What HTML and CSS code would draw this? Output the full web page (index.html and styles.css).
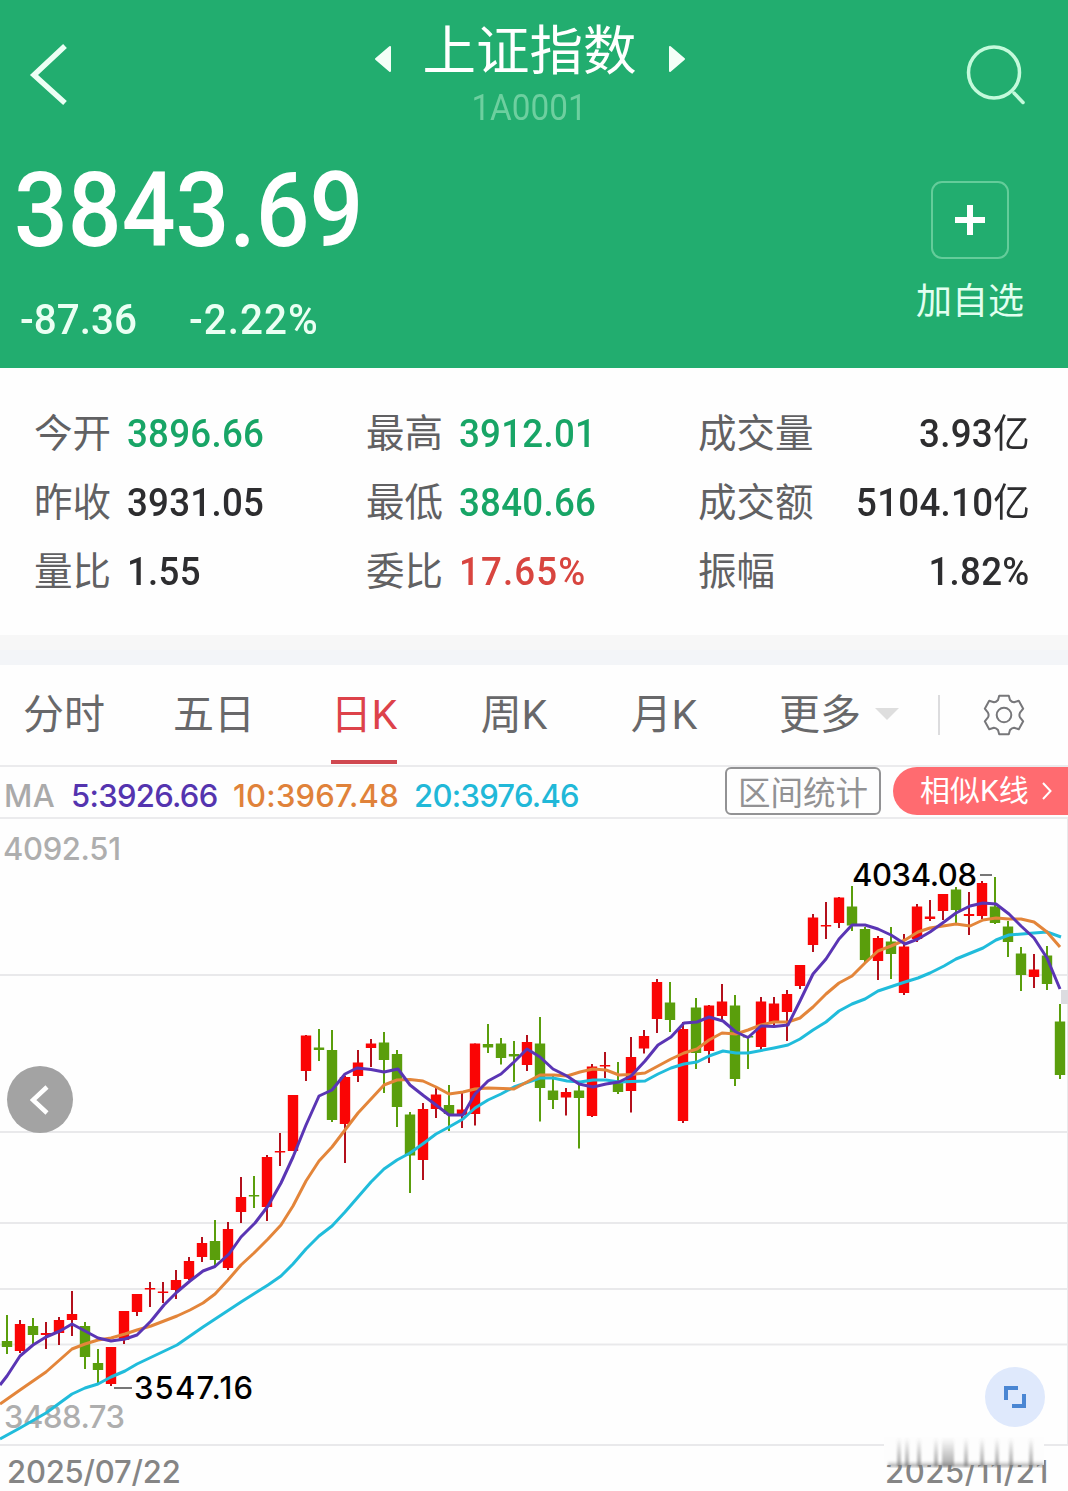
FILE: index.html
```
<!DOCTYPE html>
<html lang="zh-CN">
<head>
    <meta charset="UTF-8">
    <meta name="viewport" content="width=device-width, initial-scale=1.0">
    <title>上证指数</title>
    <link rel="stylesheet" href="styles.css">
</head>
<body>
    <header class="header">
        <div class="nav">
            <svg class="back" width="40" height="64" viewBox="0 0 40 64"><path d="M36 4 L5 33 L36 61" transform="translate(0 -1)"/></svg>
            <div class="title-box">
                <div class="title-row">
                    <svg width="18" height="28" viewBox="0 0 18 28"><path d="M16 2 V26 L2 14 Z"/></svg>
                    <h1>上证指数</h1>
                    <svg width="18" height="28" viewBox="0 0 18 28"><path d="M2 2 V26 L16 14 Z"/></svg>
                </div>
                <div class="code">1A0001</div>
            </div>
            <svg class="search" width="62" height="62" viewBox="0 0 62 62"><circle cx="30" cy="29.500" r="25.500"/><path d="M50 50 L59 59.500"/></svg>
        </div>
        <div class="quote">
            <div class="price-box">
                <div class="price">3843.69</div>
                <div class="change"><span class="diff">-87.36</span><span class="pct">-2.22%</span></div>
            </div>
            <div class="add">
                <div class="add-btn"><svg width="32" height="32" viewBox="0 0 32 32"><path d="M1 16 H31 M16 1 V31"/></svg></div>
                <span>加自选</span>
            </div>
        </div>
    </header>

    <section class="stats">
        <div class="stat"><label>今开</label><b class="down">3896.66</b></div>
        <div class="stat"><label>最高</label><b class="down">3912.01</b></div>
        <div class="stat wide"><label>成交量</label><b>3.93<i>亿</i></b></div>
        <div class="stat"><label>昨收</label><b>3931.05</b></div>
        <div class="stat"><label>最低</label><b class="down">3840.66</b></div>
        <div class="stat wide"><label>成交额</label><b>5104.10<i>亿</i></b></div>
        <div class="stat"><label>量比</label><b>1.55</b></div>
        <div class="stat"><label>委比</label><b class="up">17.65%</b></div>
        <div class="stat wide"><label>振幅</label><b>1.82%</b></div>
    </section>
    <div class="divider"></div>

    <nav class="tabs">
        <div class="tab"><span>分时</span></div>
        <div class="tab"><span>五日</span></div>
        <div class="tab active"><span>日K</span></div>
        <div class="tab"><span>周K</span></div>
        <div class="tab"><span>月K</span></div>
        <div class="tab more"><span>更多</span><i class="caret"></i></div>
        <div class="gear">
            <svg width="44" height="44" viewBox="-22 -22 44 44">
                <path d="M-6 -15 L-4.800 -19.300 H4.800 L6 -15 Q8 -12.800 10 -12.700 L14.800 -14.300 L19.200 -6.300 L16 -2.300 Q14.800 0 16 2.300 L19.200 6.300 L14.800 14.300 L10 12.700 Q8 12.800 6 15 L4.800 19.300 H-4.800 L-6 15 Q-8 12.800 -10 12.700 L-14.800 14.300 L-19.200 6.300 L-16 2.300 Q-14.800 0 -16 -2.300 L-19.200 -6.300 L-14.800 -14.300 L-10 -12.700 Q-8 -12.800 -6 -15 Z"/>
                <circle r="7.300"/>
            </svg>
        </div>
    </nav>

    <div class="ma-bar">
        <span class="ma">MA</span>
        <span class="ma5">5:3926.66</span>
        <span class="ma10">10:3967.48</span>
        <span class="ma20">20:3976.46</span>
        <div class="range-btn">区间统计</div>
        <div class="similar-btn">相似K线<svg width="12" height="20" viewBox="0 0 12 20"><path d="M2 2 L9.500 10 L2 18"/></svg></div>
    </div>

    <div class="chart-box">
        <svg id="chart" width="1068" height="627" viewBox="0 819 1068 627"></svg>
        <div class="prev"><svg width="20" height="30" viewBox="0 0 20 30"><path d="M17 2 L3 15 L17 28"/></svg></div>
        <div class="full"><svg width="24" height="24" viewBox="0 0 24 24"><path d="M3 15 V3 H15 M21 9 V21 H9"/></svg></div>
    </div>

    <footer class="dates">
        <span>2025/07/22</span>
        <span class="end">2025/11/21</span>
        <svg class="smear" width="170" height="34" viewBox="882 1434 170 34">
            <defs>
                <linearGradient id="fade" x1="0" y1="0" x2="0" y2="1">
                    <stop offset="0" stop-color="#777" stop-opacity="0"/>
                    <stop offset="1" stop-color="#777" stop-opacity=".65"/>
                </linearGradient>
                <filter id="soft" x="-5%" y="-10%" width="110%" height="120%"><feGaussianBlur stdDeviation="1.2 .8"/></filter>
            </defs>
            <rect x="884" y="1437" width="160" height="28" fill="#fdfdfd"/>
            <g id="streaks" fill="url(#fade)" filter="url(#soft)"></g>
        </svg>
    </footer>

    <script src="chart.js"></script>
</body>
</html>
```
FILE: styles.css
```
* {
    margin: 0;
    padding: 0;
    box-sizing: border-box;
}

body {
    width: 1068px;
    height: 1491px;
    overflow: hidden;
    background: #fefefe;
    font-family: Roboto, "Noto Sans CJK SC", sans-serif;
    color: #2d2d2f;
}

svg {
    display: block;
    fill: none;
}

.header {
    height: 368px;
    background: #22ad6f;
    color: #fff;
}

.nav {
    display: flex;
    justify-content: space-between;
    height: 150px;
    padding: 0 42px 0 29px;
}

.back {
    margin-top: 43px;
    stroke: #ecfff4;
    stroke-width: 5.5;
}

.search {
    margin-top: 43px;
    stroke: #c3fadb;
    stroke-width: 3.5;
    stroke-linecap: round;
}

.title-box {
    display: flex;
    flex-direction: column;
    align-items: center;
    padding-top: 13px;
    margin-left: 26px;
}

.title-row {
    display: flex;
    align-items: center;
    gap: 31px;
    height: 77px;
}

.title-row svg {
    margin-top: 14px;
    fill: #f4fff8;
    stroke: #f4fff8;
    stroke-width: 2;
    stroke-linejoin: round;
}

h1 {
    font-size: 53.5px;
    line-height: 80px;
    font-weight: 400;
}

.code {
    font-size: 37px;
    line-height: 36px;
    color: #6dcf9f;
    transform: scaleX(.9);
}

.quote {
    display: flex;
    justify-content: space-between;
    padding: 0 44px 0 14px;
}

.price {
    margin-top: 6px;
    font-size: 103px;
    line-height: 110px;
    font-weight: 500;
    transform: scaleX(.92);
    transform-origin: left;
}

.change {
    display: flex;
    margin: 28px 0 0 6px;
    font-size: 43px;
    line-height: 50px;
    font-weight: 500;
    color: #eafff3;
}

.change span {
    width: 169px;
    transform: scaleX(.94);
    transform-origin: left;
}

.pct {
    letter-spacing: 1.1px;
}

.add {
    display: flex;
    flex-direction: column;
    align-items: center;
    padding-top: 31px;
    font-size: 36px;
    line-height: 50px;
    color: #e2fff0;
}

.add-btn {
    display: flex;
    align-items: center;
    justify-content: center;
    width: 78px;
    height: 78px;
    margin-bottom: 18px;
    border: 2px solid #64cc9a;
    border-radius: 11px;
}

.add-btn svg {
    stroke: #fff;
    stroke-width: 6;
}

.stats {
    display: grid;
    grid-template-columns: 332px 332px 332px;
    grid-auto-rows: 69px;
    height: 267px;
    padding: 32px 38px 0 34px;
}

.stat {
    display: flex;
    align-items: center;
    gap: 16px;
    line-height: 69px;
}

.stat label {
    margin-top: -2px;
    font-size: 38.5px;
    color: #616163;
}

.stat b {
    font-size: 39px;
    font-weight: 500;
    letter-spacing: 0.3px;
    transform: scaleX(.94);
    transform-origin: left;
}

.stat i {
    font-style: normal;
    font-weight: 400;
}

.wide {
    justify-content: space-between;
}

.wide b {
    transform-origin: right;
}

.stat .down { color: #18a566; }
.stat .up {
    color: #d8453f;
    letter-spacing: 1.2px;
}

.divider {
    height: 30px;
    background: linear-gradient(#f7f7f7 50%, #f3f5f8 50%);
}

.tabs {
    display: flex;
    height: 102px;
    margin-left: -11px;
    border-bottom: 2px solid #ebebed;
}

.tab {
    display: flex;
    justify-content: center;
    width: 150px;
    font-size: 41px;
    line-height: 101px;
    color: #68686a;
}

.tab span {
    height: 99px;
}

.active span {
    border-bottom: 4px solid #d04850;
    color: #dd424a;
}

.more {
    align-items: center;
    justify-content: flex-start;
    width: 199px;
    padding-left: 40px;
}

.more span {
    height: 101px;
}

.caret {
    margin-left: 14px;
    margin-top: -2px;
    border: 12px solid transparent;
    border-top-color: #dedede;
    border-bottom: 0;
}

.gear {
    display: flex;
    align-items: center;
    height: 40px;
    margin-top: 30px;
    padding-left: 42px;
    border-left: 2px solid #dcdcde;
}

.gear svg {
    stroke: #77777a;
    stroke-width: 2;
    stroke-linejoin: round;
}

.ma-bar {
    display: flex;
    height: 52px;
    padding-left: 4px;
    border-bottom: 2px solid #ebebed;
    font-family: Inter, Roboto, "Noto Sans CJK SC", sans-serif;
    font-size: 31px;
    line-height: 58px;
    font-weight: 500;
    letter-spacing: -0.7px;
}

.ma {
    width: 67px;
    color: #aaa;
    letter-spacing: 0.5px;
}

.ma5 {
    width: 162px;
    color: #5434af;
}

.ma10 {
    width: 181px;
    color: #e0823a;
    letter-spacing: 0.2px;
}

.ma20 {
    width: 311px;
    color: #21b8d8;
}

.range-btn {
    width: 156px;
    height: 48px;
    border: 2px solid #929294;
    border-radius: 6px;
    font-family: "Noto Sans CJK SC", sans-serif;
    font-size: 32.5px;
    line-height: 44px;
    font-weight: 400;
    letter-spacing: 0;
    text-align: center;
    color: #929294;
}

.similar-btn {
    display: flex;
    align-items: center;
    gap: 12px;
    width: 175px;
    height: 48px;
    margin-left: 12px;
    padding-left: 27px;
    border-radius: 24px 0 0 24px;
    background: #ff6b70;
    font-family: Roboto, "Noto Sans CJK SC", sans-serif;
    font-size: 30px;
    line-height: 52px;
    font-weight: 400;
    letter-spacing: 0;
    color: #fff;
    white-space: nowrap;
}

.similar-btn svg {
    stroke: #fff;
    stroke-width: 2;
}

.chart-box {
    position: relative;
    height: 627px;
}

.grid {
    stroke: #e9e9eb;
    stroke-width: 2;
}

.label {
    font-family: Inter, Roboto, sans-serif;
    font-size: 31px;
    font-weight: 500;
    fill: #000;
}

.label.axis {
    fill: #aeaeae;
}

.line {
    stroke-width: 3;
    stroke-linejoin: round;
}

.prev,
.full {
    position: absolute;
    display: flex;
    align-items: center;
    justify-content: center;
    border-radius: 50%;
}

.prev {
    left: 7px;
    top: 247px;
    width: 66px;
    height: 67px;
    background: #a3a3a3;
}

.prev svg {
    stroke: #fff;
    stroke-width: 4.5;
}

.full {
    left: 985px;
    top: 548px;
    width: 60px;
    height: 60px;
    background: #dfe9fc;
}

.full svg {
    stroke: #4a86d3;
    stroke-width: 4;
}

.dates {
    position: relative;
    display: flex;
    justify-content: space-between;
    padding: 0 19px 0 7px;
    font-family: Inter, Roboto, sans-serif;
    font-size: 31px;
    line-height: 52px;
    font-weight: 500;
    letter-spacing: -0.2px;
    color: #858585;
}

.end {
    letter-spacing: 0.6px;
}

.smear {
    position: absolute;
    left: 882px;
    top: -12px;
}
```
FILE: chart.js
```
const NS = 'http://www.w3.org/2000/svg';
const chart = document.getElementById('chart');
const RED = '#fa0505';
const GREEN = '#5a9e0c';

function add(parent, tag, attrs, text) {
    const el = document.createElementNS(NS, tag);
    for (const key in attrs) el.setAttribute(key, attrs[key]);
    if (text) el.textContent = text;
    parent.appendChild(el);
}

// direction, high, low, body top, body bottom
const candles = [
    ['g', 1315, 1354, 1341, 1347], ['r', 1320, 1353, 1324, 1351], ['g', 1318, 1345, 1326, 1335],
    ['r', 1322, 1349, 1333, 1335], ['r', 1317, 1345, 1320, 1333], ['r', 1291, 1336, 1314, 1320],
    ['g', 1322, 1369, 1326, 1357], ['g', 1349, 1383, 1363, 1370], ['r', 1347, 1386, 1347, 1384],
    ['r', 1311, 1344, 1311, 1340], ['r', 1294, 1316, 1294, 1312], ['r', 1282, 1307, 1288, 1289.5],
    ['r', 1282, 1303, 1291.5, 1293], ['r', 1270, 1299, 1280, 1290], ['r', 1257, 1280, 1261, 1279],
    ['r', 1237, 1262, 1243, 1257], ['g', 1220, 1267, 1241, 1260], ['r', 1222, 1270, 1229, 1268],
    ['r', 1177, 1223, 1197, 1212], ['g', 1176, 1208, 1195, 1196.5], ['r', 1155, 1221, 1157, 1207],
    ['r', 1133, 1166, 1151, 1152.5], ['r', 1095, 1151, 1095, 1151], ['r', 1035, 1081, 1035.5, 1071],
    ['g', 1029, 1061, 1047.5, 1050], ['g', 1030, 1122, 1050, 1120], ['r', 1076, 1163, 1077, 1124],
    ['r', 1050, 1082, 1062.5, 1076], ['r', 1039, 1067, 1043.5, 1048], ['g', 1032, 1093, 1042.5, 1060],
    ['g', 1050, 1127, 1054, 1107], ['g', 1112, 1193, 1114.5, 1155.5], ['r', 1103, 1180, 1109, 1160],
    ['r', 1088, 1118, 1094.5, 1109], ['g', 1085, 1131, 1105, 1114], ['r', 1093, 1128, 1109.5, 1115],
    ['r', 1043.5, 1125.5, 1043.5, 1114], ['g', 1024, 1053, 1044, 1047.5], ['g', 1038, 1064.5, 1043.5, 1058],
    ['g', 1041, 1082, 1054, 1056.5], ['r', 1035, 1071, 1042, 1065], ['g', 1017, 1121.5, 1043.5, 1088],
    ['g', 1076, 1109, 1090.5, 1100], ['r', 1088, 1115.5, 1092, 1097.5], ['g', 1085, 1148.5, 1090.5, 1098],
    ['r', 1064, 1117, 1066.5, 1116], ['r', 1052, 1078, 1065, 1066.5], ['g', 1062, 1094, 1081.5, 1092],
    ['r', 1037, 1112.5, 1057, 1091], ['r', 1030, 1053.5, 1036, 1048.5], ['r', 979, 1033, 982, 1019],
    ['g', 982, 1032, 1002.5, 1020], ['r', 1022, 1123, 1029, 1121], ['g', 998, 1069, 1007.5, 1053],
    ['r', 1005, 1063, 1005.5, 1051], ['r', 984, 1021, 1001.5, 1016], ['g', 995, 1086, 1005.5, 1079],
    ['g', 1036, 1069, 1036, 1037.5], ['r', 997, 1051, 1001.5, 1047], ['r', 997, 1027, 1003.5, 1022],
    ['r', 990, 1041, 994, 1012], ['r', 965, 989, 965, 986], ['r', 914, 952, 917.5, 945],
    ['r', 902, 939, 925, 926.5], ['r', 897, 928, 897.5, 923], ['g', 886, 931, 906.5, 925.5],
    ['g', 927, 962, 929, 960], ['r', 936, 980, 938, 961], ['g', 927, 979, 941.5, 954],
    ['r', 934, 995, 946.5, 993], ['r', 904, 942, 906.5, 939], ['r', 900, 921, 916.5, 919],
    ['r', 894, 920, 894, 911], ['g', 887, 923, 889.5, 910], ['r', 892, 935, 914, 916],
    ['r', 881, 919, 883, 916], ['g', 877, 924, 906.5, 923], ['g', 921, 957, 926.5, 942],
    ['g', 947, 991, 953.5, 975], ['r', 954, 988, 969.5, 977], ['g', 946, 990, 955.5, 984],
    ['g', 1004, 1079, 1021.5, 1075]
];

const ma20 = '0,1439 20,1428 46,1413 72,1394 85,1388 98,1384 111,1377 125,1371 137,1364 177,1345 203,1327 241,1302 268,1285 281,1276 293,1264 306,1249 319,1236 332,1226 345,1212 358,1197 371,1182 384,1169 397,1160 410,1153 424,1143 436,1134 449,1127 463,1119 475,1108 488,1100 501,1094 514,1087 540,1078 553,1078 567,1081 580,1082 593,1080 606,1080 619,1082 645,1081 658,1074 671,1068 684,1064 697,1062 709,1056 723,1051 736,1053 748,1053 774,1048 788,1045 800,1039 813,1030 826,1022 839,1011 852,1004 865,999 878,991 905,982 918,978 930,973 944,966 956,959 983,948 996,940 1009,935 1034,933 1047,932 1061,937';
const ma10 = '0,1404 20,1390 46,1372 72,1349 85,1344 98,1340 111,1338 125,1334 137,1330 151,1326 164,1321 177,1316 190,1310 203,1303 215,1294 228,1280 241,1265 254,1253 268,1239 281,1225 293,1206 306,1181 319,1161 332,1147 345,1130 358,1113 371,1099 384,1085 397,1080 410,1079.5 423,1081 436,1087 449,1094 463,1092 475,1089 488,1088 514,1089 527,1082 540,1075 554,1075 567,1076 580,1072 593,1069 606,1070 619,1075 631,1074.5 645,1073 658,1066 671,1059 684,1053 697,1049 709,1040 722,1033 736,1034 748,1030 761,1025 774,1022 788,1022 800,1018 813,1007 826,994 839,983 852,976 865,963 878,951 891,946 905,940 918,932 930,928 956,924 970,926 983,920 996,918 1009,919 1021,919 1034,922 1047,932 1060,947';
const ma5 = '0,1385 7,1376 20,1356 33,1345 46,1337 60,1331 72,1324 85,1331 98,1338 111,1341 125,1339 137,1335 151,1321 164,1305 177,1292 190,1281 203,1271 215,1266.5 229,1254 241,1237 255,1223 268,1206 281,1183 293,1157 306,1125 319,1096 332,1090 345,1074 357,1068 371,1069.5 384,1072 398,1069 410,1085 424,1096 436,1105 449,1115 463,1115 475,1094 488,1081 501,1074 514,1062 527,1049 540,1057 553,1069 567,1076 579,1084 593,1087 606,1084 619,1082 631,1076 645,1061 658,1045 671,1037 684,1023 697,1022 709,1017 723,1021 736,1032 748,1037.5 761,1026 774,1026.5 788,1025 800,1001 813,974 826,959 839,939 852,925 865,925 878,929 891,935 905,944 918,939 930,932 944,922 956,913 970,906 983,903 996,904 1009,914 1021,926 1034,938 1047,958 1060,989';

[975, 1132, 1223, 1289, 1344.5, 1445].forEach(y => {
    add(chart, 'path', { class: 'grid', d: `M0 ${y} H1068` });
});
add(chart, 'path', { class: 'grid', d: 'M1068 819 V1445' });

candles.forEach(([dir, high, low, top, bottom], i) => {
    const x = 7 + i * 13;
    add(chart, 'rect', { x: x - 1, y: high, width: 2, height: low - high, fill: dir === 'r' ? '#b3101c' : GREEN });
    add(chart, 'rect', { x: x - 5.2, y: top, width: 10.4, height: bottom - top, fill: dir === 'r' ? RED : GREEN });
});

add(chart, 'text', { class: 'label axis', x: 3, y: 860, textLength: 118 }, '4092.51');
add(chart, 'text', { class: 'label axis', x: 4, y: 1428, textLength: 121 }, '3488.73');

add(chart, 'polyline', { class: 'line', points: ma20, stroke: '#20bcdb' });
add(chart, 'polyline', { class: 'line', points: ma10, stroke: '#e3853a' });
add(chart, 'polyline', { class: 'line', points: ma5, stroke: '#5a35b4' });

// high / low markers
add(chart, 'path', { d: 'M114 1388 H132 M980 875 H992', stroke: '#777', 'stroke-width': 2 });
add(chart, 'text', { class: 'label', x: 134, y: 1399, textLength: 119 }, '3547.16');
add(chart, 'text', { class: 'label', x: 852, y: 886, textLength: 125 }, '4034.08');
add(chart, 'rect', { x: 1061, y: 990, width: 7, height: 14, fill: '#dcdce0' });

const streaks = document.getElementById('streaks');
[[897, 4], [905, 4], [917, 4], [934, 4], [942, 12], [964, 4], [980, 4], [995, 4], [1009, 4], [1029, 4]].forEach(([x, w]) => {
    add(streaks, 'rect', { x, y: 1438, width: w, height: 29 });
});
add(streaks, 'rect', { x: 888, y: 1461, width: 156, height: 6 });
```
